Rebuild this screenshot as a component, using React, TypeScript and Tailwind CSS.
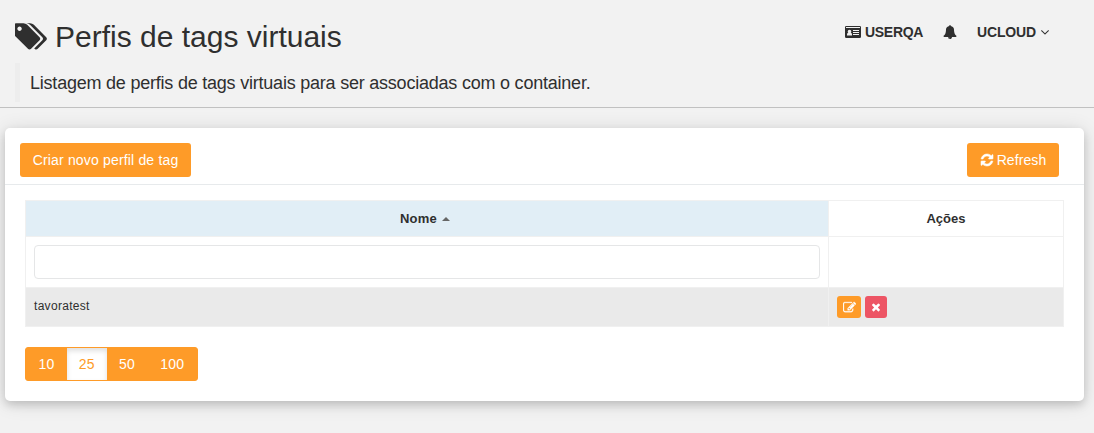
import React from "react";

type IconProps = { d: string; box?: string; className: string };

function Icon({ d, box = "0 0 1792 1792", className }: IconProps) {
  return (
    <svg viewBox={box} className={`inline-block shrink-0 ${className}`} fill="currentColor" aria-hidden="true">
      <path d={d} fillRule="evenodd" />
    </svg>
  );
}

const TAGS =
  "M384 448q0-53-37.5-90.5t-90.5-37.5-90.5 37.5-37.5 90.5 37.5 90.5 90.5 37.5 90.5-37.5 37.5-90.5zm1067 576q0 53-37 90l-491 492q-39 37-91 37-53 0-90-37l-715-716q-38-37-64.5-101t-26.5-117v-416q0-52 38-90t90-38h416q53 0 117 26.5t102 64.5l715 714q37 39 37 91zm384 0q0 53-37 90l-491 492q-39 37-91 37-36 0-59-14t-53-45l470-470q37-37 37-90 0-52-37-91l-715-714q-38-38-102-64.5t-117-26.5h224q53 0 117 26.5t102 64.5l715 714q37 39 37 91z";
const REFRESH =
  "M1639 1056q0 5-1 7-64 268-268 434.5t-478 166.5q-146 0-282.5-55t-243.5-157l-129 129q-19 19-45 19t-45-19-19-45v-448q0-26 19-45t45-19h448q26 0 45 19t19 45-19 45l-137 137q71 66 161 102t187 36q134 0 250-65t186-179q11-17 53-117 8-23 30-23h192q13 0 22.5 9.5t9.5 22.5zm25-800v448q0 26-19 45t-45 19h-448q-26 0-45-19t-19-45 19-45l138-138q-148-137-349-137-134 0-250 65t-186 179q-11 17-53 117-8 23-30 23h-199q-13 0-22.5-9.5t-9.5-22.5v-7q65-268 270-434.5t480-166.5q146 0 284 55.5t245 156.5l130-129q19-19 45-19t45 19 19 45z";
const TIMES =
  "M1490 1322q0 40-28 68l-136 136q-28 28-68 28t-68-28l-294-294-294 294q-28 28-68 28t-68-28l-136-136q-28-28-28-68t28-68l294-294-294-294q-28-28-28-68t28-68l136-136q28-28 68-28t68 28l294 294 294-294q28-28 68-28t68 28l136 136q28 28 28 68t-28 68l-294 294 294 294q28 28 28 68z";
const EDIT =
  "M888 1184l116-116-152-152-116 116v56h96v96h56zm440-720q-16-16-33 1l-350 350q-17 17-1 33t33-1l350-350q17-17 1-33zm80 594v190q0 119-84.5 203.5t-203.5 84.5h-832q-119 0-203.5-84.5t-84.5-203.5v-832q0-119 84.5-203.5t203.5-84.5h832q63 0 117 25 15 7 18 23 3 17-9 29l-49 49q-14 14-32 8-23-6-45-6h-832q-66 0-113 47t-47 113v832q0 66 47 113t113 47h832q66 0 113-47t47-113v-126q0-13 9-22l64-64q15-15 35-7t20 29zm-96-738l288 288-672 672h-288v-288zm444 132l-92 92-288-288 92-92q28-28 68-28t68 28l152 152q28 28 28 68t-28 68z";
const ANGLE_DOWN =
  "M1395 736q0 13-10 23l-466 466q-10 10-23 10t-23-10l-466-466q-10-10-10-23t10-23l50-50q10-10 23-10t23 10l393 393 393-393q10-10 23-10t23 10l50 50q10 10 10 23z";
const BELL =
  "M912 1696q0-16-16-16-59 0-101.5-42.5t-42.5-101.5q0-16-16-16t-16 16q0 73 51.5 124.5t124.5 51.5q16 0 16-16zm816-288q0 52-38 90t-90 38h-448q0 106-75 181t-181 75-181-75-75-181h-448q-52 0-90-38t-38-90q50-42 91-88t85-119.5 74.5-158.5 50-206 19.5-260q0-152 117-282.5t307-158.5q-8-19-8-39 0-40 28-68t68-28 68 28 28 68q0 20-8 39 190 28 307 158.5t117 282.5q0 139 19.5 260t50 206 74.5 158.5 85 119.5 91 88z";
const ID_CARD =
  "M1.2 0h13.6q1.200 0 1.200 1.200v9.600q0 1.200-1.200 1.200h-13.600q-1.200 0-1.200-1.200v-9.600q0-1.200 1.200-1.200zM1 1v1h14v-1zM2 9.500h5v-1q0-1.500-1.300-1.800q.6-.5.6-1.300q0-1.600-1.800-1.600t-1.800 1.600q0 .8.600 1.300q-1.300.3-1.300 1.800zM8 4v1h6v-1zM8 6v1h6v-1zM8 8v1h6v-1z";

const PAGE_SIZES = [10, 25, 50, 100];

function PageSizes({ current }: { current: number }) {
  return (
    <div className="mt-5 flex h-[34px] w-[173px] overflow-hidden rounded-[3px] border border-[#fe9b28] bg-[#fe9b28] text-sm leading-8 tracking-[0.2px] text-white">
      {PAGE_SIZES.map((n) => (
        <button
          key={n}
          className={
            n === current
              ? "w-10 bg-white text-[#fe9b28] shadow-[inset_0_3px_5px_rgba(0,0,0,0.125)]"
              : n === 100
                ? "w-[50px]"
                : "w-[41px]"
          }
        >
          {n}
        </button>
      ))}
    </div>
  );
}

export default function App() {
  return (
    <div className="h-[433px] overflow-hidden bg-[#f2f2f2] font-['Liberation_Sans',Arial,sans-serif] text-[#2f2f2f]">
      <header className="flex h-[108px] justify-between border-b border-[#c1c1c1] pl-[15px]">
        <div>
          <h1 className="flex h-[63px] items-center pt-[10px] text-[30px] leading-none">
            <Icon d={TAGS} box="0 0 1835 1792" className="mr-2 h-[31px] w-8" />
            Perfis de tags virtuais
          </h1>
          <p className="h-[39px] border-l-[5px] border-[#ededed] pl-2.5 text-lg leading-[40px] tracking-[-0.22px]">
            Listagem de perfis de tags virtuais para ser associadas com o container.
          </p>
        </div>
        <nav className="mr-[42px] flex h-[64px] items-center text-sm font-bold">
          <Icon d={ID_CARD} box="0 0 16 12" className="mr-1 h-3 w-4" />
          <span className="w-[58px] tracking-[-0.3px]">USERQA</span>
          <Icon d={BELL} className="mr-5 ml-5 h-3.5 w-3.5" />
          <span className="w-[60px] tracking-[-0.15px]">UCLOUD</span>
          <Icon d={ANGLE_DOWN} className="ml-px h-3.5 w-3.5" />
        </nav>
      </header>

      <main className="mt-5 ml-[5px] h-[273px] w-[1079px] rounded-[5px] bg-white shadow-[0_4px_8px_rgba(0,0,0,0.15),0_2px_20px_rgba(0,0,0,0.12)]">
        <div className="flex h-[57px] items-start justify-between border-b border-[#e7eaec] pt-[15px] pr-[25px] pl-[15px] text-sm text-white">
          <button className="h-[34px] w-[171px] rounded-[3px] bg-[#fe9b28] tracking-[0.17px]">
            Criar novo perfil de tag
          </button>
          <button className="flex h-[34px] w-[92px] items-center justify-center gap-[3px] rounded-[3px] bg-[#fe9b28] tracking-[0.1px]">
            <Icon d={REFRESH} className="h-3.5 w-3.5 stroke-current stroke-[70]" />
            Refresh
          </button>
        </div>

        <div className="px-5 pt-[15px]">
          <table className="w-[1039px] table-fixed border-collapse text-left text-[13px]">
            <colgroup>
              <col className="w-[803px]" />
              <col />
            </colgroup>
            <thead>
              <tr className="h-9">
                <th className="border border-[#f0f0f0] bg-[#e1eef6] p-0 text-center">
                  <span className="flex items-center justify-center pr-1 tracking-[0.2px]">
                    Nome
                    <svg viewBox="0 0 8 4" className="ml-[5px] h-1 w-2" fill="#666">
                      <path d="M4 0L8 4H0z" />
                    </svg>
                  </span>
                </th>
                <th className="border border-[#f0f0f0] p-0 text-center">Ações</th>
              </tr>
            </thead>
            <tbody>
              <tr className="h-[51px]">
                <td className="border border-[#f0f0f0] px-2 py-0">
                  <input className="block h-[34px] w-full rounded-[4px] border border-[#e5e6e7] bg-white px-3" />
                </td>
                <td className="border border-[#f0f0f0]" />
              </tr>
              <tr className="h-[39px] bg-[#eaeaea]">
                <td className="border border-[#f0f0f0] px-2 pt-0 pb-[3px] text-xs tracking-[0.3px]">tavoratest</td>
                <td className="border border-[#f0f0f0] px-2 py-0">
                  <div className="flex gap-1 text-white">
                    <button className="flex h-[22px] w-6 items-center justify-center rounded-[3px] bg-[#fe9b28]">
                      <Icon d={EDIT} className="h-[13px] w-[13px] stroke-current stroke-[40]" />
                    </button>
                    <button className="flex h-[22px] w-[22px] items-center justify-center rounded-[3px] bg-[#ed5565]">
                      <Icon d={TIMES} className="mb-px h-3 w-3" />
                    </button>
                  </div>
                </td>
              </tr>
            </tbody>
          </table>
          <PageSizes current={25} />
        </div>
      </main>
    </div>
  );
}
